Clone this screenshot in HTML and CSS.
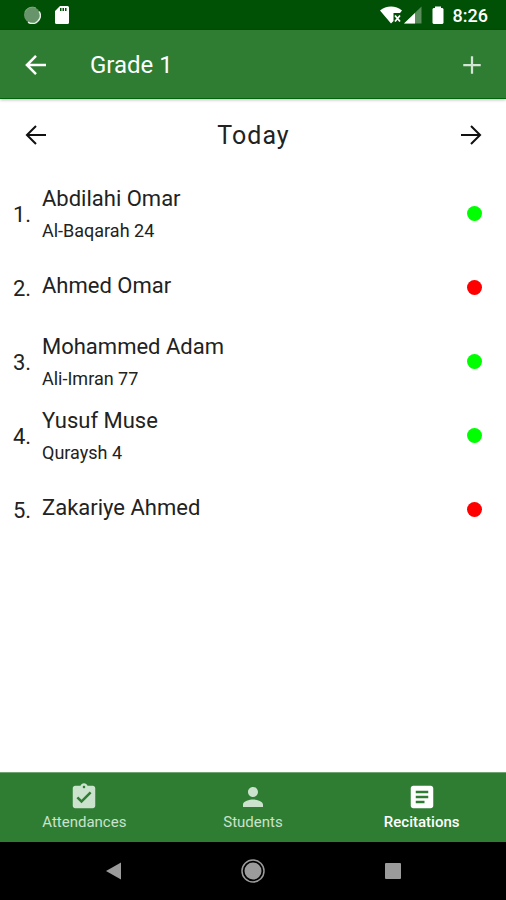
FILE: index.html
```html
<!DOCTYPE html>
<html lang="en">
<head>
<meta charset="utf-8">
<meta name="viewport" content="width=device-width, initial-scale=1">
<title>Grade 1 – Recitations</title>
<link rel="stylesheet" href="styles.css">
</head>
<body>
<div class="status-bar">
  <div class="status-group">
    <svg class="status-sync" width="18" height="18" viewBox="0 0 18 18" aria-hidden="true"><circle cx="9" cy="9" r="8" fill="#67946a"/><path d="M16.2 5.500A8 8 0 0 1 5 16.200" fill="none" stroke="#e4f0e4" stroke-width="1.500"/><path d="M2 6A8 8 0 0 1 13 2" fill="none" stroke="#82a884" stroke-width="1"/></svg>
    <svg width="16" height="20" viewBox="0 0 16 20" aria-hidden="true"><path fill="#fff" fill-rule="evenodd" d="M6 1h7.500A1.500 1.500 0 0 1 15 2.500v15a1.500 1.500 0 0 1-1.500 1.500h-11A1.500 1.500 0 0 1 1 17.500V6zM6 3v3h1.500V3zM8.500 3v3H10V3zM11 3v3h1.500V3z"/></svg>
  </div>
  <div class="status-group">
    <svg width="22" height="20" viewBox="0 0 22 20" aria-hidden="true"><path fill="#fff" d="M0 5.500C6 .3 16 .3 22 5.500L20 8h-6.500v8L11 18.500z"/><path d="M15 10.500l5 6M20 10.500l-5 6" stroke="#fff" stroke-width="1.800"/></svg>
    <svg class="status-signal" width="18" height="18" viewBox="0 0 18 18" aria-hidden="true"><path fill="#fff" fill-opacity=".35" d="M17.500.5v17H0z"/><path fill="#fff" d="M11 7v10.500H0z"/></svg>
    <svg class="status-battery" width="12" height="20" viewBox="0 0 12 20" aria-hidden="true"><path fill="#fff" d="M3 1.500h6V3h1.500l1 1v14l-1 1h-9l-1-1V4l1-1H3z"/></svg>
    <time>8:26</time>
  </div>
</div>
<header class="toolbar">
  <button class="icon-button" type="button" aria-label="Back"><svg width="32" height="32" viewBox="0 0 24 24"><path d="M19.500 12H6M12 5.200L5.200 12l6.800 6.800" fill="none" stroke="#fff" stroke-width="1.900"/></svg></button>
  <h1>Grade 1</h1>
  <button class="icon-button" type="button" aria-label="Add"><svg width="30" height="30" viewBox="0 0 24 24"><path d="M12 5v14M5 12h14" stroke="#d3e5d4" stroke-width="1.800"/></svg></button>
</header>
<main>
  <div class="day-picker">
    <button class="icon-button" type="button" aria-label="Previous day"><svg width="32" height="32" viewBox="0 0 24 24"><path d="M19.500 12H6M12 5.200L5.200 12l6.800 6.800" fill="none" stroke="#111" stroke-width="1.500"/></svg></button>
    <h2>Today</h2>
    <button class="icon-button" type="button" aria-label="Next day"><svg width="32" height="32" viewBox="0 0 24 24"><path d="M4.500 12H18M12 5.200l6.800 6.800-6.800 6.800" fill="none" stroke="#111" stroke-width="1.500"/></svg></button>
  </div>
  <ol class="students">
    <li><span class="number">1.</span><div class="student"><span class="name">Abdilahi Omar</span><span class="passage">Al-Baqarah 24</span></div><span class="dot done"></span></li>
    <li><span class="number">2.</span><div class="student"><span class="name">Ahmed Omar</span></div><span class="dot missing"></span></li>
    <li><span class="number">3.</span><div class="student"><span class="name">Mohammed Adam</span><span class="passage">Ali-Imran 77</span></div><span class="dot done"></span></li>
    <li><span class="number">4.</span><div class="student"><span class="name">Yusuf Muse</span><span class="passage">Quraysh 4</span></div><span class="dot done"></span></li>
    <li><span class="number">5.</span><div class="student"><span class="name">Zakariye Ahmed</span></div><span class="dot missing"></span></li>
  </ol>
</main>
<nav class="tabs">
  <a href="#attendances"><svg width="30" height="30" viewBox="0 0 24 24" aria-hidden="true"><path fill="currentColor" d="M19 3h-4.180C14.400 1.840 13.300 1 12 1s-2.400.84-2.820 2H5c-1.100 0-2 .9-2 2v14c0 1.100.9 2 2 2h14c1.100 0 2-.9 2-2V5c0-1.100-.9-2-2-2zm-7 0c.55 0 1 .45 1 1s-.45 1-1 1-1-.45-1-1 .45-1 1-1zm-2 14l-4-4 1.410-1.410L10 14.170l6.590-6.590L18 9l-8 8z"/></svg>Attendances</a>
  <a href="#students"><svg width="30" height="30" viewBox="0 0 24 24" aria-hidden="true"><path fill="currentColor" d="M12 12c2.210 0 4-1.790 4-4s-1.790-4-4-4-4 1.790-4 4 1.790 4 4 4zm0 2c-2.670 0-8 1.340-8 4v2h16v-2c0-2.660-5.330-4-8-4z"/></svg>Students</a>
  <a class="active" href="#recitations" aria-current="page"><svg width="30" height="30" viewBox="0 0 24 24" aria-hidden="true"><path fill="currentColor" d="M19 3H5c-1.100 0-2 .9-2 2v14c0 1.100.9 2 2 2h14c1.100 0 2-.9 2-2V5c0-1.100-.9-2-2-2zm-5 14H7v-2h7v2zm3-4H7v-2h10v2zm0-4H7V7h10v2z"/></svg>Recitations</a>
</nav>
<div class="system-nav">
  <button type="button" aria-label="System back"><svg width="24" height="24" viewBox="0 0 24 24"><path fill="#9b9b9b" d="M20 3.500v17L5 12z"/></svg></button>
  <button type="button" aria-label="Home"><svg width="24" height="24" viewBox="0 0 24 24"><circle cx="12" cy="12" r="11" fill="none" stroke="#9b9b9b" stroke-width="1.500"/><circle cx="12" cy="12" r="8.500" fill="#9b9b9b"/></svg></button>
  <button type="button" aria-label="Overview"><svg width="24" height="24" viewBox="0 0 24 24"><rect x="4" y="4" width="16" height="16" rx="1" fill="#9b9b9b"/></svg></button>
</div>
</body>
</html>
```
FILE: styles.css
```css
* {
  box-sizing: border-box;
}

body {
  margin: 0;
  min-height: 100vh;
  display: flex;
  flex-direction: column;
  background: #fff;
  color: #222;
  font-family: Roboto, sans-serif;
}

button {
  padding: 0;
  border: 0;
  background: none;
}

svg {
  display: block;
}

h1,
h2 {
  margin: 0;
  font-weight: 400;
}

.status-bar {
  height: 30px;
  padding: 0 18px 0 23px;
  display: flex;
  align-items: center;
  justify-content: space-between;
  background: #005005;
  color: #fff;
  font-size: 18px;
  font-weight: 500;
}

.status-group {
  display: flex;
  align-items: center;
}

.status-sync {
  margin-right: 13px;
}

.status-signal {
  margin-left: 2px;
}

.status-battery {
  margin: 0 9px 0 10px;
}

.toolbar {
  height: 69px;
  padding: 2px 16px 0 18px;
  display: flex;
  align-items: center;
  background: #2e7d32;
  border-bottom: 1px solid #00640a;
  box-shadow: 0 1px 3px #0004;
  color: #fff;
}

.toolbar h1 {
  flex: 1;
  margin-left: 36px;
  font-size: 24px;
}

.day-picker {
  padding: 16px 17px 20px 18px;
  display: flex;
  align-items: center;
  justify-content: space-between;
}

.icon-button {
  flex: none;
  display: grid;
  place-items: center;
  width: 36px;
  height: 40px;
}

.day-picker h2 {
  font-size: 25px;
  letter-spacing: 1px;
}

main {
  flex: 1;
}

.students {
  margin: 0;
  padding: 1px 24px 0 13px;
  list-style: none;
}

.students li {
  height: 74px;
  display: flex;
  align-items: center;
}

.number {
  width: 29px;
  padding-top: 3px;
  font-size: 22px;
}

.student {
  flex: 1;
  display: flex;
  flex-direction: column;
}

.name {
  padding-bottom: 3px;
  font-size: 22px;
  line-height: 32px;
}

.passage {
  font-size: 18px;
  line-height: 26px;
}

.dot {
  width: 15px;
  height: 15px;
  border-radius: 50%;
}

.done {
  background: #0f0;
}

.missing {
  background: #f00;
}

.tabs {
  height: 70px;
  padding-top: 9px;
  display: grid;
  grid-template-columns: repeat(3, 1fr);
  background: #2e7d32;
  border-top: 1px solid #6fa572;
}

.tabs a {
  display: flex;
  flex-direction: column;
  align-items: center;
  color: #cbe2cc;
  font-size: 15px;
  line-height: 20px;
  text-decoration: none;
}

.tabs .active {
  color: #fff;
  font-weight: 500;
}

.system-nav {
  height: 58px;
  padding: 0 43px;
  display: grid;
  grid-template-columns: repeat(3, 1fr);
  align-items: center;
  justify-items: center;
  background: #000;
}
```
